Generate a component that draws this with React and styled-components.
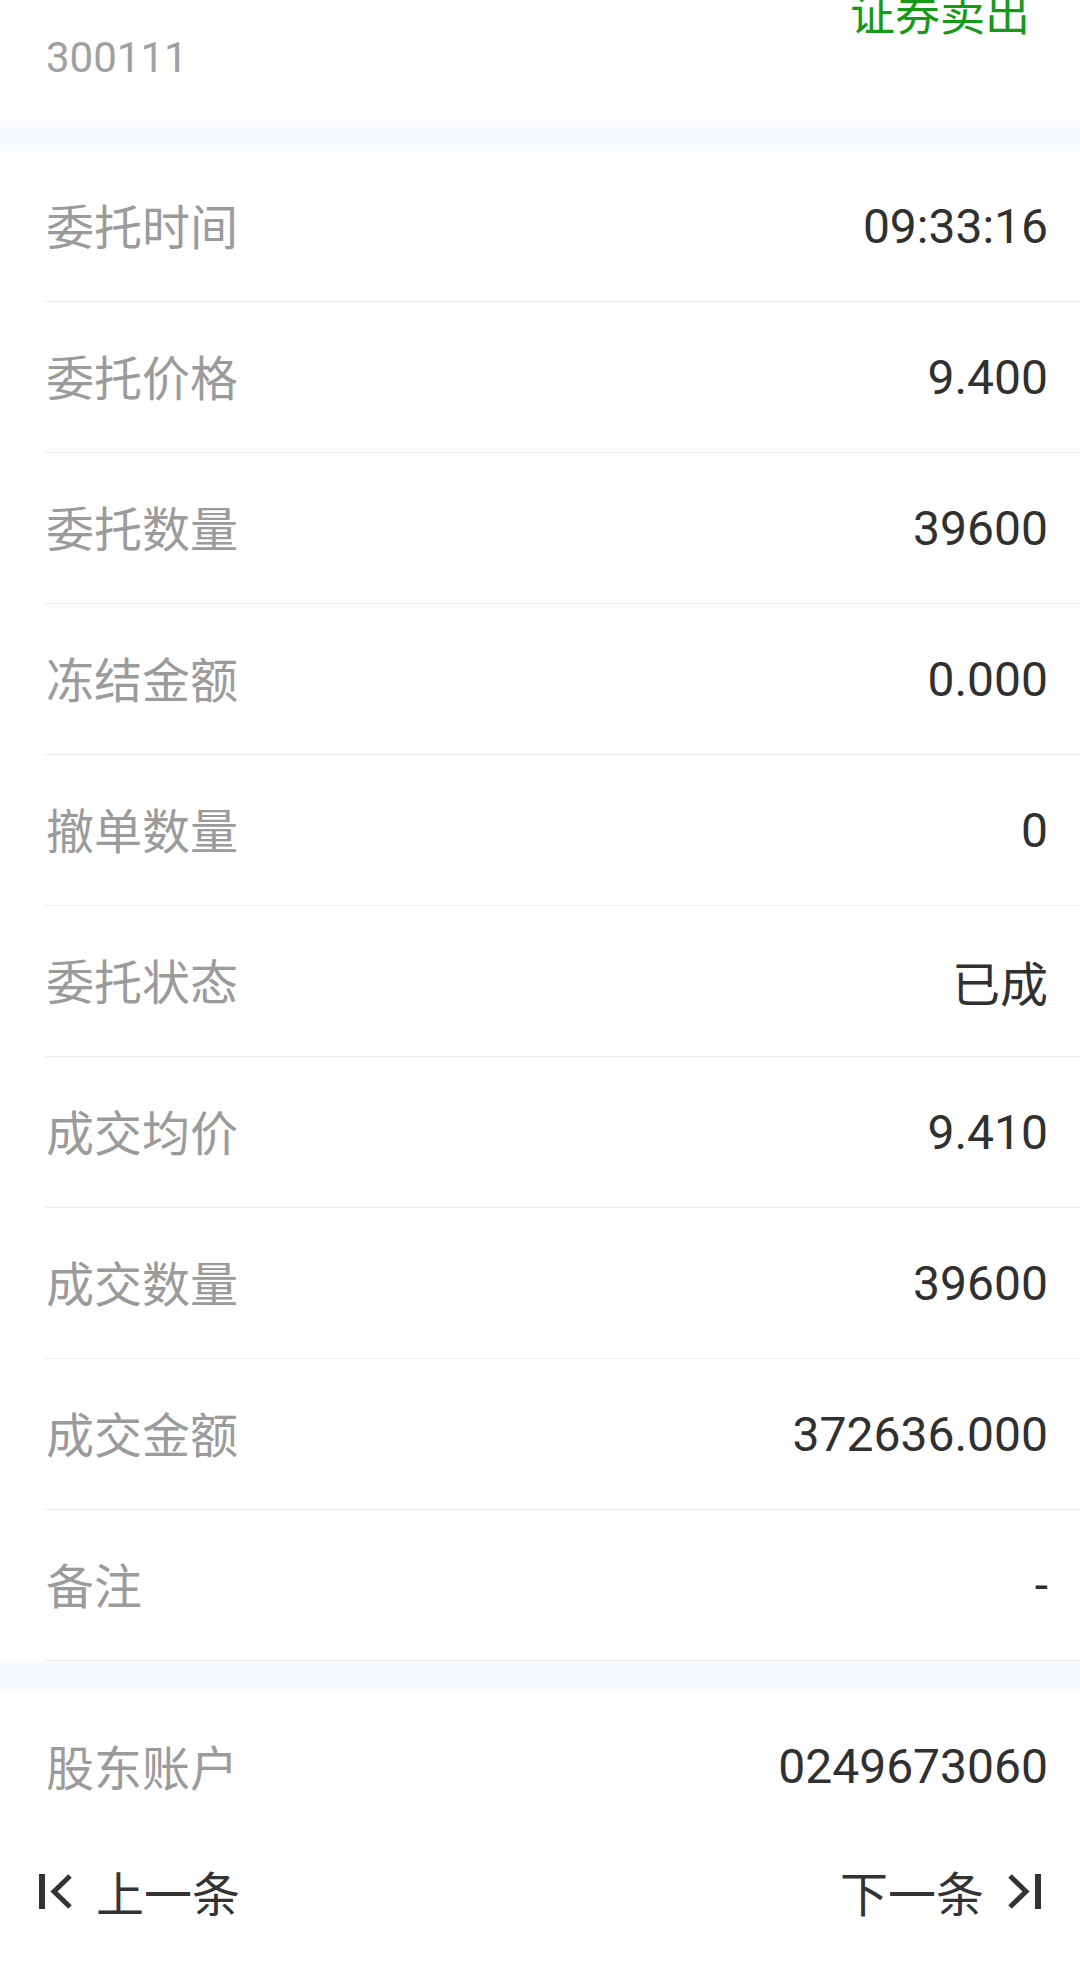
import React from 'react'
import styled, { createGlobalStyle } from 'styled-components'

const GlobalStyle = createGlobalStyle`
  html, body {
    margin: 0;
    padding: 0;
    background: #fff;
  }
  body {
    font-family: "Roboto", "Noto Sans CJK SC", sans-serif;
    -webkit-font-smoothing: antialiased;
  }
`

const Page = styled.div`
  width: 1080px;
  height: 1982px;
  overflow: hidden;
  background: #fff;
`

const Header = styled.div`
  display: flex;
  justify-content: space-between;
  align-items: flex-start;
  height: 172px;
  margin-top: -51px;
  padding: 0 50px 0 46px;
  box-sizing: border-box;
`

const StockInfo = styled.div`
  display: flex;
  flex-direction: column;
`

const StockName = styled.div`
  font-size: 48px;
  line-height: 60px;
  height: 60px;
  color: #4a78b8;
`

const StockCode = styled.div`
  margin-top: 24px;
  font-size: 42px;
  line-height: 50px;
  color: #a0a0a0;
`

const TradeType = styled.div`
  margin-top: 37px;
  font-size: 45px;
  line-height: 60px;
  color: #149a17;
`

const Band = styled.div`
  height: 30px;
  background: #f7faff;
`

const List = styled.div`
  display: flex;
  flex-direction: column;
`

const Row = styled.div`
  display: flex;
  align-items: center;
  justify-content: space-between;
  height: 151px;
  margin-left: 45px;
  padding: 0 32px 0 1px;
  box-sizing: border-box;
  border-bottom: ${(p) => (p.$divider ? '1px solid #ececec' : 'none')};
`

const Label = styled.span`
  padding-bottom: 4px;
  font-size: 48px;
  color: #9b9b9b;
`

const Value = styled.span`
  font-size: 48px;
  color: #303030;
`

const Nav = styled.div`
  display: flex;
  align-items: center;
  justify-content: space-between;
  height: 98px;
  padding: 0 36px;
`

const NavButton = styled.div`
  display: flex;
  align-items: center;
  gap: 24px;
  font-size: 48px;
  color: #333;
`

const NavIcon = styled.svg`
  width: 36px;
  height: 36px;
  flex-shrink: 0;
  transform: ${(p) => (p.$flip ? 'scaleX(-1)' : 'none')};
`

const SkipIcon = ({ flip }) => (
  <NavIcon viewBox="0 0 36 36" $flip={flip}>
    <rect x="3" y="1" width="6" height="35" fill="#333" />
    <polyline
      points="34,3 18,18.5 34,34"
      fill="none"
      stroke="#333"
      strokeWidth="5"
      strokeLinejoin="miter"
    />
  </NavIcon>
)

const orderRows = [
  ['委托时间', '09:33:16'],
  ['委托价格', '9.400'],
  ['委托数量', '39600'],
  ['冻结金额', '0.000'],
  ['撤单数量', '0'],
  ['委托状态', '已成'],
  ['成交均价', '9.410'],
  ['成交数量', '39600'],
  ['成交金额', '372636.000'],
  ['备注', '-'],
]

const App = () => {
  return (
    <>
      <GlobalStyle />
      <Page>
        <Header>
          <StockInfo>
            <StockName>向日葵</StockName>
            <StockCode>300111</StockCode>
          </StockInfo>
          <TradeType>证券卖出</TradeType>
        </Header>
        <Band />
        <List>
          {orderRows.map(([label, value]) => (
            <Row key={label} $divider>
              <Label>{label}</Label>
              <Value>{value}</Value>
            </Row>
          ))}
        </List>
        <Band />
        <Row>
          <Label>股东账户</Label>
          <Value>0249673060</Value>
        </Row>
        <Nav>
          <NavButton>
            <SkipIcon />
            <span>上一条</span>
          </NavButton>
          <NavButton>
            <span>下一条</span>
            <SkipIcon flip />
          </NavButton>
        </Nav>
      </Page>
    </>
  )
}

export default App
